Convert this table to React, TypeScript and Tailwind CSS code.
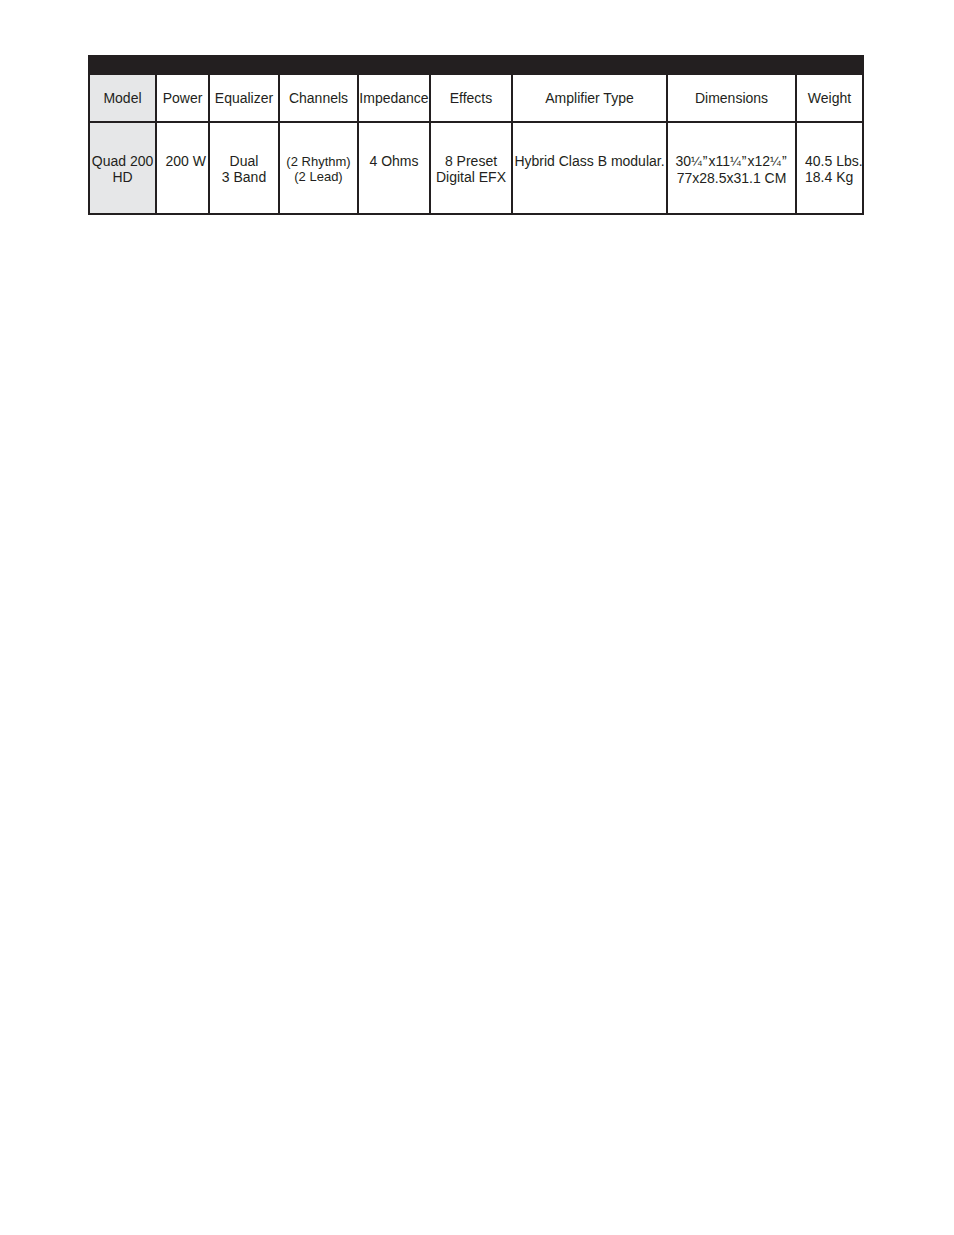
const headers = [
  "Model",
  "Power",
  "Equalizer",
  "Channels",
  "Impedance",
  "Effects",
  "Amplifier Type",
  "Dimensions",
  "Weight",
];

function Frac() {
  return (
    <>
      <span className="text-[13px]">¼</span>
      <span className="px-[1px]">”</span>
    </>
  );
}

export default function App() {
  return (
    <div className="min-h-[1235px] w-full bg-white pt-[55px] pl-[88px] font-['Liberation_Sans',Arial,sans-serif] text-[14px] leading-[16px] text-[#231f20]">
      <div className="w-[776px] bg-[#231f20]">
        <div className="h-[20px]"></div>
        <div className="grid grid-cols-[65px_51px_68px_77px_70px_80px_153px_127px_65px] gap-[2px] px-[2px] pb-[2px]">
          {headers.map((h, i) => (
            <div
              key={h}
              className={
                "h-[46px] flex items-center justify-center text-center whitespace-nowrap " +
                (i === 0 ? "bg-[#e6e7e8]" : "bg-white")
              }
            >
              {h}
            </div>
          ))}

          <div className="h-[90px] pt-[30px] text-center bg-[#e6e7e8]">
            Quad 200
            <br />
            HD
          </div>
          <div className="pt-[30px] pr-[2px] text-right bg-white whitespace-nowrap">200 W</div>
          <div className="pt-[30px] text-center bg-white">
            Dual
            <br />
            3 Band
          </div>
          <div className="pt-[31px] text-center bg-white text-[13px] leading-[15px]">
            (2 Rhythm)
            <br />
            (2 Lead)
          </div>
          <div className="pt-[30px] text-center bg-white">4 Ohms</div>
          <div className="pt-[30px] text-center bg-white">
            8 Preset
            <br />
            Digital EFX
          </div>
          <div className="pt-[30px] text-center bg-white whitespace-nowrap">Hybrid Class B modular.</div>
          <div className="pt-[30px] text-center bg-white whitespace-nowrap">
            30<Frac />x11<Frac />x12<Frac />
            <br />
            77x28.5x31.1 CM
          </div>
          <div className="pt-[30px] pl-[8px] bg-white whitespace-nowrap">
            40.5 Lbs.
            <br />
            18.4 Kg
          </div>
        </div>
      </div>
    </div>
  );
}
